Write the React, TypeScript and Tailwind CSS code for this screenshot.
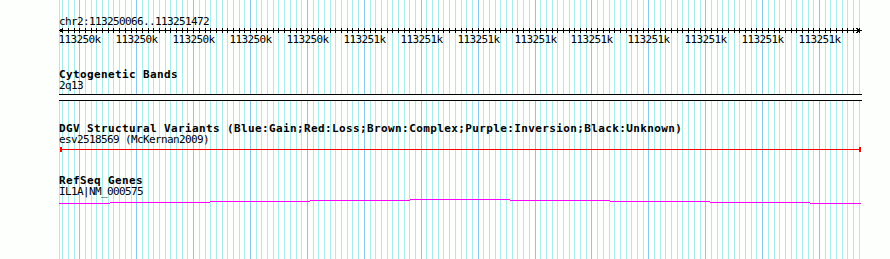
import React from "react";

const START = 66;
const col = (bp: number) => Math.round(60 + ((bp - START) * 800) / 1406);

const minor: { x: number; major: boolean }[] = [];
for (let bp = 70; bp <= 1470; bp += 10) {
  minor.push({ x: col(bp), major: bp % 100 === 0 });
}

const labels: { x: number; t: string }[] = [];
for (let bp = 100; bp <= 1400; bp += 100) {
  labels.push({ x: col(bp), t: bp <= 500 ? "113250k" : "113251k" });
}

const segs: [number, number, number][] = [
  [59, 110, 203],
  [110, 210, 202],
  [210, 310, 201],
  [310, 410, 200],
  [410, 510, 199],
  [510, 610, 200],
  [610, 710, 201],
  [710, 810, 202],
  [810, 861, 203],
];

const mono = "font-['DejaVu_Sans_Mono',monospace] text-[11px] leading-[11px] text-black whitespace-pre";
const small = `${mono} tracking-[-0.62px]`;
const bold = `${mono} font-bold tracking-[0.38px]`;

export default function App() {
  return (
    <div className="relative w-[890px] h-[259px] overflow-hidden bg-[#fcfffc]">
      <svg className="absolute inset-0" width={890} height={259} shapeRendering="crispEdges">
        <rect x={59} y={0} width={1} height={259} fill="#a8ecec" />
        {minor.map((m, i) => (
          <rect key={i} x={m.x} y={0} width={1} height={259} fill={m.major ? "#88c8ee" : "#a8ecec"} />
        ))}
      </svg>
      <div className="relative flex flex-col pl-[59px] pt-[15px]">
        <div className={`${small} h-[13px] leading-[13px]`}>chr2:113250066..113251472</div>
        <svg width={803} height={18} shapeRendering="crispEdges" className="block">
          <rect x={0} y={2} width={803} height={1} fill="#000" />
          {minor.map((m, i) => (
            <rect key={i} x={m.x - 59} y={0} width={1} height={5} fill="#000" />
          ))}
          <polyline points="4.5,0.5 0.5,2.5 4.5,4.5" fill="none" stroke="#000" strokeWidth={1} />
          <polyline points="797.5,0.5 801.5,2.5 797.5,4.5" fill="none" stroke="#000" strokeWidth={1} />
          {labels.map((l, i) => (
            <text
              key={i}
              x={l.x - 59 - 20.5}
              y={15}
              fill="#000"
              className="font-['DejaVu_Sans_Mono',monospace] text-[11px] tracking-[-0.62px]"
            >
              {l.t}
            </text>
          ))}
        </svg>

        <div className={`${bold} mt-[23px] h-[11px]`}>Cytogenetic Bands</div>
        <div className={`${small} h-[11px]`}>2q13</div>
        <svg width={803} height={7} shapeRendering="crispEdges" className="block mt-[3px]">
          <rect x={0} y={0} width={803} height={7} fill="#ffffff" />
          <rect x={0} y={0} width={803} height={1} fill="#000" />
          <rect x={0} y={6} width={803} height={1} fill="#000" />
        </svg>

        <div className={`${bold} mt-[22px] h-[11px]`}>
          DGV Structural Variants (Blue:Gain;Red:Loss;Brown:Complex;Purple:Inversion;Black:Unknown)
        </div>
        <div className={`${small} h-[11px]`}>esv2518569 (McKernan2009)</div>
        <svg width={803} height={7} shapeRendering="crispEdges" className="block mt-px">
          <rect x={1} y={3} width={801} height={1} fill="#ff0000" />
          <rect x={1} y={1} width={2} height={5} fill="#ff0000" />
          <rect x={800} y={1} width={2} height={5} fill="#ff0000" />
        </svg>

        <div className={`${bold} mt-[22px] h-[11px]`}>RefSeq Genes</div>
        <div className={`${small} h-[11px]`}>IL1A|NM_000575</div>
        <svg width={803} height={7} shapeRendering="crispEdges" className="block mt-px">
          {segs.map(([a, b, y], i) => (
            <rect key={i} x={a - 59} y={y - 198} width={b - a} height={1} fill="#ff00ff" />
          ))}
        </svg>
      </div>
    </div>
  );
}
